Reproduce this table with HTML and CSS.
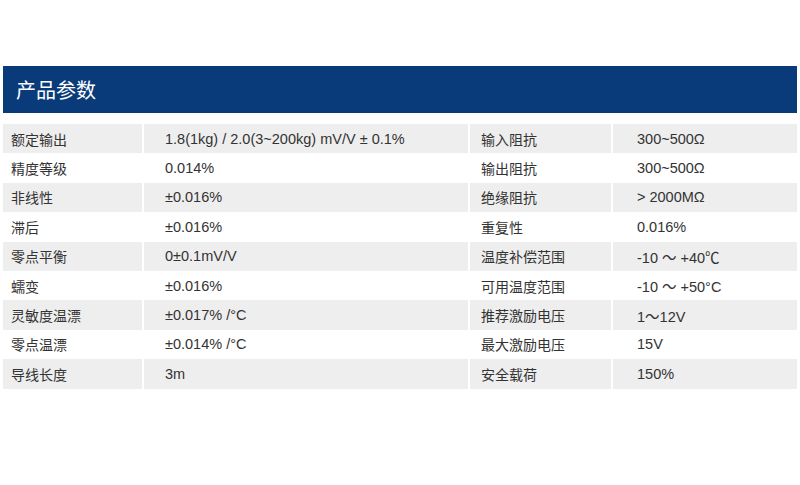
FILE: index.html
```html
<!DOCTYPE html>
<html lang="zh-CN">
<head>
<meta charset="utf-8">
<title>产品参数</title>
<link rel="stylesheet" href="styles.css">
</head>
<body>
<div class="page">
  <div class="title-bar">产品参数</div>
  <table class="spec">
    <colgroup>
      <col class="c1"><col class="c2"><col class="c3"><col class="c4">
    </colgroup>
    <tbody>
      <tr><td class="k">额定输出</td><td class="v">1.8(1kg) / 2.0(3~200kg) mV/V ± 0.1%</td><td class="k2">输入阻抗</td><td class="v2">300~500Ω</td></tr>
      <tr><td class="k">精度等级</td><td class="v">0.014%</td><td class="k2">输出阻抗</td><td class="v2">300~500Ω</td></tr>
      <tr><td class="k">非线性</td><td class="v">±0.016%</td><td class="k2">绝缘阻抗</td><td class="v2">&gt; 2000MΩ</td></tr>
      <tr><td class="k">滞后</td><td class="v">±0.016%</td><td class="k2">重复性</td><td class="v2">0.016%</td></tr>
      <tr><td class="k">零点平衡</td><td class="v">0±0.1mV/V</td><td class="k2">温度补偿范围</td><td class="v2">-10 ～ +40℃</td></tr>
      <tr><td class="k">蠕变</td><td class="v">±0.016%</td><td class="k2">可用温度范围</td><td class="v2">-10 ～ +50°C</td></tr>
      <tr><td class="k">灵敏度温漂</td><td class="v">±0.017% /°C</td><td class="k2">推荐激励电压</td><td class="v2">1～12V</td></tr>
      <tr><td class="k">零点温漂</td><td class="v">±0.014% /°C</td><td class="k2">最大激励电压</td><td class="v2">15V</td></tr>
      <tr><td class="k">导线长度</td><td class="v">3m</td><td class="k2">安全载荷</td><td class="v2">150%</td></tr>
    </tbody>
  </table>
</div>
</body>
</html>
```

FILE: styles.css
```css
html, body {
  margin: 0;
  padding: 0;
  background: #ffffff;
}
body {
  font-family: "Liberation Sans", Arial, "Noto Sans CJK SC", sans-serif;
  color: #333333;
}
.page {
  padding: 66px 3px 0 3px;
}
.title-bar {
  background: #093b7b;
  color: #ffffff;
  height: 47px;
  line-height: 47px;
  padding-left: 13px;
  font-size: 20px;
  font-family: "Noto Sans CJK SC", sans-serif;
  margin-bottom: 11px;
}
.spec {
  width: 794px;
  border-collapse: collapse;
  table-layout: fixed;
  font-size: 14.5px;
}
.c1 { width: 140px; }
.c2 { width: 326px; }
.c3 { width: 143px; }
.c4 { width: 185px; }
.spec tr {
  height: 29.4px;
}
.spec tr:nth-child(odd) td {
  background: #eeeeee;
}
.spec td {
  padding: 0;
  border-left: 2px solid #ffffff;
  white-space: nowrap;
  vertical-align: middle;
}
.spec td:first-child {
  border-left: none;
}
.spec .k {
  padding-left: 8px;
  font-size: 14px;
  font-family: "Noto Sans CJK SC", sans-serif;
}
.spec .v {
  padding-left: 21px;
}
.spec .k2 {
  padding-left: 11px;
  font-size: 14px;
  font-family: "Noto Sans CJK SC", sans-serif;
}
.spec .v2 {
  padding-left: 24px;
}
```
